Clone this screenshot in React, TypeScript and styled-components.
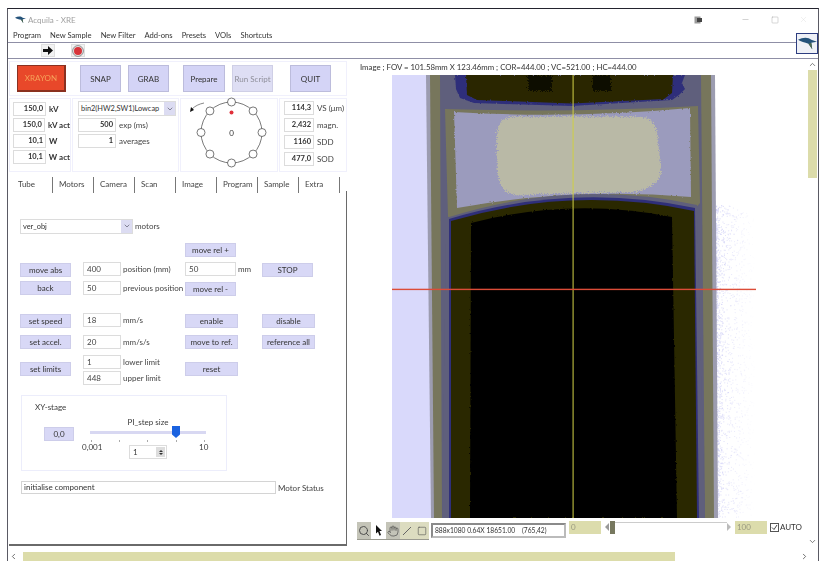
import React from "react";
import styled, { createGlobalStyle } from "styled-components";
import { ChevronDown, ChevronUp, ChevronLeft, ChevronRight, Search, Hand, Square, Minus, X } from "lucide-react";

const Global = createGlobalStyle`
  html, body { margin: 0; padding: 0; background: #fff; }
  body { font-family: "Lato", "Open Sans", sans-serif; font-size: 8px; color: #3a3a3a; width: 830px; height: 569px; overflow: hidden; }
  * { box-sizing: border-box; }
`;

const Page = styled.div`
  padding: 8px 11px 0 7px;
  filter: blur(0.3px);
`;
const Win = styled.div`
  position: relative;
  width: 812px;
  height: 553px;
  border-top: 1px solid #23232e;
  border-left: 1px solid #5a5a64;
  border-right: 1px solid #5a5a64;
  display: flex;
  flex-direction: column;
`;
const TitleBar = styled.div`
  height: 19px;
  flex: none;
  display: flex;
  align-items: center;
  padding-left: 7px;
  padding-top: 2px;
  gap: 2px;
  color: #a0a0a0;
`;
const WinControls = styled.div`
  margin-left: auto;
  display: flex;
  align-items: center;
`;
const ControlSlot = styled.span<{ $w: number; $pale?: boolean }>`
  width: ${(p) => p.$w}px;
  display: flex;
  justify-content: center;
  color: ${(p) => (p.$pale ? "#d8d8d8" : "#888")};
`;
const MenuBar = styled.div`
  height: 14px;
  flex: none;
  display: flex;
  align-items: center;
  padding-left: 5px;
  gap: 9px;
  font-size: 7.6px;
  color: #333;
`;
const ToolStrip = styled.div`
  height: 17px;
  flex: none;
  border-top: 1px solid #8f8fa6;
  border-bottom: 1px solid #8f8fa6;
  display: flex;
  align-items: center;
  padding-left: 33px;
  gap: 16px;
`;
const ToolBtn = styled.div`
  width: 14px;
  height: 13px;
  background: #f2f2f2;
  border: 1px solid #e0e0e0;
  display: flex;
  align-items: center;
  justify-content: center;
`;
const LogoBox = styled.div`
  position: absolute;
  top: 24px;
  right: 0;
  width: 22px;
  height: 21px;
  border: 1px solid #2d3d80;
  background: #eef0f6;
  display: flex;
  align-items: center;
  justify-content: center;
`;
const Main = styled.div`
  flex: none;
  height: 487px;
  display: flex;
`;
const Left = styled.div`
  width: 339px;
  flex: none;
  display: flex;
  flex-direction: column;
  padding: 2px 0 0 1px;
`;
const ButtonRow = styled.div`
  height: 35px;
  flex: none;
  border: 1px solid #f0f0fc;
  display: flex;
  align-items: center;
  padding-left: 6px;
`;
const BigBtn = styled.div<{ $w: number; $ml: number; $dim?: boolean }>`
  width: ${(p) => p.$w}px;
  height: 27px;
  margin-left: ${(p) => p.$ml}px;
  background: ${(p) => (p.$dim ? "#dedef4" : "#d4d4f6")};
  border: 1px solid ${(p) => (p.$dim ? "#cfcfe6" : "#bcbcdc")};
  color: ${(p) => (p.$dim ? "#8f8f9a" : "#333")};
  display: flex;
  align-items: center;
  justify-content: center;
  white-space: nowrap;
`;
const XrayBtn = styled(BigBtn)`
  background: #e8482a;
  border: 1px solid #8a3020;
  border-bottom-width: 2px;
  border-right-width: 2px;
  color: #f6a25a;
`;
const InfoRow = styled.div`
  height: 74px;
  margin-top: 2px;
  flex: none;
  display: flex;
  gap: 1px;
`;
const InfoGroup = styled.div<{ $w: number }>`
  width: ${(p) => p.$w}px;
  flex: none;
  border: 1px solid #f0f0fc;
  position: relative;
  display: flex;
  flex-direction: column;
`;
const ReadoutCol = styled.div<{ $step: number; $pad: number; $top: number }>`
  display: flex;
  flex-direction: column;
  gap: ${(p) => p.$step}px;
  padding: ${(p) => p.$top}px 0 0 ${(p) => p.$pad}px;
`;
const Readout = styled.div`
  display: flex;
  align-items: center;
  gap: 3px;
`;
const NumBox = styled.div<{ $w: number }>`
  width: ${(p) => p.$w}px;
  height: 14px;
  border: 1px solid #dcdcdc;
  background: #fff;
  font-weight: 700;
  font-size: 7.5px;
  text-align: right;
  padding-right: 2px;
  line-height: 12px;
  color: #333;
`;
const BoldLabel = styled.span`
  font-weight: 700;
  color: #333;
  white-space: nowrap;
`;
const PlainLabel = styled.span`
  color: #444;
  white-space: nowrap;
`;
const SelectBox = styled.div<{ $w: number }>`
  width: ${(p) => p.$w}px;
  height: 15px;
  border: 1px solid #dcdcdc;
  display: flex;
  align-items: center;
  justify-content: space-between;
  padding-left: 2px;
  background: #fff;
  font-size: 7.4px;
  color: #333;
  white-space: nowrap;
`;
const SelectArrow = styled.span`
  width: 11px;
  height: 100%;
  background: #dcdcf2;
  display: flex;
  align-items: center;
  justify-content: center;
  color: #556;
`;
const MidCol = styled.div`
  padding: 2px 0 0 5px;
  display: flex;
  flex-direction: column;
  gap: 2px;
`;
const RotarySvg = styled.svg`
  overflow: visible;
`;
const Tabs = styled.div`
  height: 16px;
  margin-top: 5px;
  flex: none;
  display: flex;
  padding-left: 3px;
`;
const Tab = styled.div`
  width: 41px;
  border-right: 1px solid #777;
  padding-left: 6px;
  line-height: 15px;
  color: #444;
  white-space: nowrap;
`;
const Panel = styled.div`
  flex: 1;
  margin-top: -2px;
  border-right: 1px solid #6a6a6a;
  border-bottom: 2px solid #6a6a6a;
  padding: 28px 0 0 11px;
  display: flex;
  flex-direction: column;
`;
const MotorRow = styled.div`
  display: flex;
  align-items: center;
  gap: 2px;
  height: 14px;
`;
const ControlGrid = styled.div`
  margin-top: 10px;
  display: grid;
  grid-template-columns: 63px 102px 77px 60px;
  grid-template-rows: 19px 19px 32px 22px 20px 31px;
  align-items: start;
`;
const Cell = styled.div<{ $col: number; $row: number; $top?: number }>`
  grid-column: ${(p) => p.$col};
  grid-row: ${(p) => p.$row};
  margin-top: ${(p) => p.$top ?? 0}px;
  display: flex;
  align-items: center;
  gap: 2px;
`;
const SmallBtn = styled.div<{ $w?: number }>`
  width: ${(p) => p.$w ?? 51}px;
  height: 14px;
  background: #d8d8f6;
  border: 1px solid #cdcdea;
  display: flex;
  align-items: center;
  justify-content: center;
  color: #333;
  white-space: nowrap;
`;
const Field = styled.div<{ $w: number }>`
  width: ${(p) => p.$w}px;
  height: 14px;
  border: 1px solid #dcdcdc;
  background: #fff;
  padding-left: 3px;
  line-height: 12px;
  color: #444;
`;
const StackCell = styled(Cell)`
  flex-direction: column;
  align-items: flex-start;
  gap: 2px;
`;
const LimitRow = styled.div`
  display: flex;
  align-items: center;
  gap: 2px;
`;
const XYBox = styled.div`
  margin: 9px 0 0 1px;
  width: 206px;
  height: 76px;
  border: 1px solid #ecedfb;
  position: relative;
  display: grid;
  grid-template-columns: 68px 116px;
  grid-template-rows: 14px 12px 20px 15px;
  padding: 6px 0 0 0;
`;
const XYTitle = styled.div`
  grid-column: 1;
  padding-left: 13px;
`;
const StepTitle = styled.div`
  grid-column: 2;
  grid-row: 2;
  text-align: center;
  line-height: 12px;
`;
const XYLeft = styled.div`
  grid-column: 1;
  grid-row: 3;
  padding-left: 22px;
  margin-top: -1px;
`;
const Slider = styled.div`
  grid-column: 2;
  grid-row: 3;
  position: relative;
`;
const SliderTrack = styled.div`
  position: absolute;
  left: 0;
  right: 0;
  top: 3px;
  height: 3px;
  background: #d8d8f2;
`;
const Thumb = styled.div`
  position: absolute;
  left: 82px;
  top: -2px;
  width: 8px;
  height: 12px;
  background: #1a62e0;
  clip-path: polygon(0 0, 100% 0, 100% 70%, 50% 100%, 0 70%);
`;
const Tick = styled.span<{ $x: number }>`
  position: absolute;
  top: 12px;
  left: ${(p) => p.$x}px;
  width: 1px;
  height: 2px;
  background: #aaa;
`;
const ScaleLabel = styled.span<{ $x: number }>`
  position: absolute;
  left: ${(p) => p.$x}px;
  top: 45px;
  line-height: 12px;
`;
const Spin = styled.div`
  position: absolute;
  left: 107px;
  top: 49px;
  width: 38px;
  height: 14px;
  border: 1px solid #dcdcdc;
  padding-left: 3px;
  line-height: 12px;
  background: #fff;
`;
const SpinBtns = styled.span`
  position: absolute;
  right: 1px;
  top: 1px;
  width: 9px;
  height: 10px;
  background: #ddd;
  display: flex;
  flex-direction: column;
  align-items: center;
  justify-content: center;
  gap: 1px;
`;
const Tri = styled.i<{ $down?: boolean }>`
  display: block;
  width: 0;
  height: 0;
  border-left: 2px solid transparent;
  border-right: 2px solid transparent;
  ${(p) => (p.$down ? "border-top: 2px solid #333;" : "border-bottom: 2px solid #333;")}
`;
const StatusRow = styled.div`
  margin: 10px 0 0 1px;
  display: flex;
  align-items: center;
  gap: 2px;
`;
const StatusField = styled.div`
  width: 255px;
  height: 13px;
  border: 1px solid #d4d4d4;
  padding-left: 2px;
  line-height: 11px;
  color: #333;
`;
const Right = styled.div`
  flex: 1;
  display: flex;
  position: relative;
`;
const Viewer = styled.div`
  flex: 1;
  display: flex;
  flex-direction: column;
`;
const Caption = styled.div`
  height: 16px;
  padding: 2px 0 0 13px;
  line-height: 12px;
  font-size: 7.8px;
  color: #333;
  white-space: nowrap;
`;
const ImageWrap = styled.div`
  padding-left: 45px;
  height: 443px;
  flex: none;
`;
const ScanSvg = styled.svg`
  display: block;
`;
const Bottom = styled.div`
  margin-top: 3px;
  display: flex;
  padding-left: 10px;
  align-items: flex-start;
`;
const Tools = styled.div`
  display: flex;
  margin-top: 1px;
  height: 18px;
  background: #c8c8b4;
  border-bottom: 1px solid #9a9a90;
`;
const ToolCell = styled.div<{ $on?: boolean; $alt?: boolean }>`
  width: 14.4px;
  display: flex;
  align-items: center;
  justify-content: center;
  background: ${(p) => (p.$on ? "#fff" : p.$alt ? "#dcdcc0" : "#c4c4b8")};
  color: #444;
`;
const CoordBox = styled.div`
  margin-left: 2px;
  margin-top: 2px;
  width: 135px;
  height: 15px;
  border: 2px solid #8a8a8a;
  border-right-color: #bbb;
  border-bottom-color: #bbb;
  background: #fff;
  font-size: 6.7px;
  line-height: 11px;
  padding-left: 2px;
  color: #333;
  white-space: pre;
`;
const RangeBox = styled.div<{ $ml: number }>`
  margin-left: ${(p) => p.$ml}px;
  width: 32px;
  height: 13px;
  background: #dcdcac;
  color: #9a9a80;
  line-height: 12px;
  padding-left: 2px;
`;
const RangeSlider = styled.div`
  margin-left: 4px;
  width: 124px;
  height: 15px;
  position: relative;
`;
const RangeLine = styled.div`
  position: absolute;
  left: 8px;
  right: 2px;
  top: 1px;
  height: 1px;
  background: #ccc;
`;
const RangeThumb = styled.div`
  position: absolute;
  left: 5px;
  top: 0;
  width: 5px;
  height: 13px;
  background: #77785f;
`;
const RangeArrow = styled.i<{ $right?: boolean }>`
  position: absolute;
  ${(p) => (p.$right ? "right: -2px; border-left: 4px solid #bbb;" : "left: 0; border-right: 4px solid #999;")}
  top: 2px;
  width: 0;
  height: 0;
  border-top: 4px solid transparent;
  border-bottom: 4px solid transparent;
`;
const AutoWrap = styled.div`
  display: flex;
  margin: 1px 0 0 3px;
  align-items: center;
  gap: 1px;
  color: #333;
  line-height: 10px;
`;
const Check = styled.span`
  width: 9px;
  height: 9px;
  border: 1px solid #555;
  display: flex;
  align-items: center;
  justify-content: center;
`;
const VScroll = styled.div`
  width: 11px;
  flex: none;
  display: flex;
  flex-direction: column;
  align-items: center;
  color: #555;
  padding-top: 1px;
`;
const VThumb = styled.div`
  margin-top: 1px;
  width: 9px;
  height: 108px;
  background: #dcdcaa;
`;
const VSpace = styled.div`
  flex: 1;
`;
const HScroll = styled.div`
  height: 15px;
  padding: 5px 0 0 1px;
  flex: none;
  display: flex;
  align-items: center;
  color: #444;
`;
const HThumb = styled.div`
  margin-left: 5px;
  width: 652px;
  height: 9px;
  background: #dcdcaa;
`;
const HEnd = styled.div`
  margin-left: auto;
  margin-right: 9px;
  display: flex;
`;

const Bird = ({ w = 11 }: { w?: number }) => (
  <svg width={w} height={w * 0.7} viewBox="0 0 20 14">
    <path d="M0 3 C5 0 11 0 14 3 L20 5 L14 6 L15 13 L11 7 C7 6 3 5 0 3Z" fill="#24527a" />
    <path d="M11 7 L15 13 L14 6Z" fill="#4e6a50" />
  </svg>
);

const Rotary = () => {
  const cx = 50.5, cy = 33.5, r = 30.5;
  const pts = Array.from({ length: 8 }, (_, i) => {
    const a = (i * Math.PI) / 4;
    return [cx + r * Math.sin(a), cy - r * Math.cos(a)];
  });
  return (
    <RotarySvg width="97" height="72" viewBox="0 0 97 72">
      <circle cx={cx} cy={cy} r={r} fill="none" stroke="#555" strokeWidth="0.8" />
      {pts.map(([x, y], i) => (
        <circle key={i} cx={x} cy={y} r="4" fill="#fff" stroke="#555" strokeWidth="0.8" />
      ))}
      <circle cx={cx} cy={13.5} r="2" fill="#e0303a" />
      <text x={cx} y={36.5} textAnchor="middle" fontSize="8" fill="#333" fontFamily="Lato, sans-serif">0</text>
      <path d="M23 4 C18 5 14 7 11 10" fill="none" stroke="#555" strokeWidth="0.7" />
      <path d="M9 13 L10 8 L13 11Z" fill="#111" />
    </RotarySvg>
  );
};

function dots() {
  const out: React.ReactElement[] = [];
  let s = 12345;
  const rnd = () => {
    s = (s * 1103515245 + 12345) & 0x7fffffff;
    return s / 0x7fffffff;
  };
  for (let i = 0; i < 1700; i++) {
    const y = 130 + rnd() * 313;
    const d = Math.pow(rnd(), 2.6) * 38;
    out.push(<rect key={i} x={324 + d} y={y} width="1" height="1" fill="#cfcff6" opacity={0.8 - d / 50} />);
  }
  return out;
}

const Scan = () => (
  <ScanSvg width="364" height="443" viewBox="0 0 364 443">
    <defs>
      <filter id="rough" x="-5%" y="-5%" width="110%" height="110%">
        <feTurbulence type="fractalNoise" baseFrequency="0.7" numOctaves="2" seed="4" result="n" />
        <feDisplacementMap in="SourceGraphic" in2="n" scale="8" />
      </filter>
      <filter id="rough2" x="-5%" y="-5%" width="110%" height="110%">
        <feTurbulence type="fractalNoise" baseFrequency="0.5" numOctaves="2" seed="8" result="n" />
        <feDisplacementMap in="SourceGraphic" in2="n" scale="2.5" />
      </filter>
      <filter id="speck" x="-10%" y="-15%" width="120%" height="130%" colorInterpolationFilters="sRGB">
        <feGaussianBlur in="SourceAlpha" stdDeviation="5" result="b" />
        <feTurbulence type="fractalNoise" baseFrequency="0.85" numOctaves="1" seed="3" result="n" />
        <feColorMatrix in="n" type="matrix" values="0 0 0 0 0  0 0 0 0 0  0 0 0 0 0  1 0 0 0 0" result="na" />
        <feComposite in="b" in2="na" operator="arithmetic" k1="0" k2="1.6" k3="1" k4="-1" result="c" />
        <feComponentTransfer in="c" result="t"><feFuncA type="linear" slope="10" intercept="-4.5" /></feComponentTransfer>
        <feFlood floodColor="#b9b9a6" />
        <feComposite in2="t" operator="in" />
      </filter>
    </defs>
    <rect width="364" height="443" fill="#fff" />
    <rect width="44" height="443" fill="#d9d9fb" />
    {dots()}
    <path d="M34 0 H323 L326 443 H39Z" fill="#9c9cb0" />
    <path d="M38 0 H319 L322 443 H42Z" fill="#77765c" />
    <path d="M48 0 H309 L313 443 H50Z" fill="#5f5f7c" />
    {/* top cavity */}
    <path d="M63 0 H293 L290 8 L293 14 L287 20 L280 25 L180 31 L82 28 L68 23 L64 14Z" fill="#2f2f7a" filter="url(#rough2)" />
    <path d="M74 0 H281 L280 18 L272 24 L180 28.5 L85 25 L75 20Z" fill="#2a2800" filter="url(#rough2)" />
    <rect x="136" y="0" width="24" height="16" fill="#0c0c06" filter="url(#rough)" />
    <rect x="200" y="0" width="19" height="16" fill="#0c0c06" filter="url(#rough)" />
    {/* olive frame and lavender window */}
    <path d="M53 34 Q180 38 306 31 L308 128 L302 135 L56 142Z" fill="#77765c" />
    <path d="M62 37 Q180 44 298 33 L299 122 Q180 112 65 133Z" fill="#9b9bbd" filter="url(#rough2)" />
    <path d="M116 40 H252 Q265 42 267 60 L271 100 Q264 116 240 119 Q180 119 122 122 Q106 118 104 100 L103 58 Q106 42 116 40Z" fill="#b9b9a6" filter="url(#speck)" />
    {/* lower cavity */}
    <path d="M54 143 Q180 103 305 130 L313 443 H50Z" fill="#5f5f7c" />
    <path d="M57 144 Q180 107 303 133 L307 443 H57Z" fill="#2f2f7a" />
    <path d="M59 146 Q180 110 302 136 L305 443 H59Z" fill="#2a2800" />
    <path d="M79 148 Q180 122 280 142 L285 443 H78Z" fill="#000" filter="url(#rough2)" />
    <rect x="180.5" y="0" width="1.2" height="443" fill="#cfcf45" opacity="0.85" />
    <rect x="0" y="213.7" width="364" height="1.4" fill="#dc4c38" />
  </ScanSvg>
);

export default function App() {
  return (
    <>
      <Global />
      <Page>
        <Win>
          <TitleBar>
            <Bird />
            <span>Acquila - XRE</span>
            <WinControls>
              <ControlSlot $w={20}>
                <svg width="8" height="8" viewBox="0 0 8 8"><rect x="0.5" y="0.5" width="6" height="7" fill="#999" /><rect x="3" y="2" width="5" height="4" fill="#444" /></svg>
              </ControlSlot>
              <ControlSlot $w={23} />
              <ControlSlot $w={29}><Minus size={9} strokeWidth={1} /></ControlSlot>
              <ControlSlot $w={29}><Square size={8} strokeWidth={1} /></ControlSlot>
              <ControlSlot $w={29} $pale><X size={9} strokeWidth={1} /></ControlSlot>
            </WinControls>
          </TitleBar>
          <MenuBar>
            {["Program", "New Sample", "New Filter", "Add-ons", "Presets", "VOIs", "Shortcuts"].map((m) => (
              <span key={m}>{m}</span>
            ))}
          </MenuBar>
          <ToolStrip>
            <ToolBtn>
              <svg width="10" height="9" viewBox="0 0 10 9"><path d="M0 3 H5 V0 L10 4.5 L5 9 V6 H0Z" fill="#111" /></svg>
            </ToolBtn>
            <ToolBtn>
              <svg width="12" height="12" viewBox="0 0 12 12"><circle cx="6" cy="6" r="5.4" fill="#e8e8e8" stroke="#777" strokeWidth="0.8" /><circle cx="6" cy="6" r="4" fill="#d8343a" /></svg>
            </ToolBtn>
          </ToolStrip>
          <LogoBox><Bird w={19} /></LogoBox>
          <Main>
            <Left>
              <ButtonRow>
                <XrayBtn $w={49} $ml={1}>XRAYON</XrayBtn>
                <BigBtn $w={41} $ml={14}>SNAP</BigBtn>
                <BigBtn $w={41} $ml={7}>GRAB</BigBtn>
                <BigBtn $w={42} $ml={14}>Prepare</BigBtn>
                <BigBtn $w={41} $ml={7} $dim>Run Script</BigBtn>
                <BigBtn $w={41} $ml={17}>QUIT</BigBtn>
              </ButtonRow>
              <InfoRow>
                <InfoGroup $w={62}>
                  <ReadoutCol $step={2} $pad={3} $top={3}>
                    <Readout><NumBox $w={33}>150,0</NumBox><BoldLabel>kV</BoldLabel></Readout>
                    <Readout><NumBox $w={33}>150,0</NumBox><BoldLabel>kV act</BoldLabel></Readout>
                    <Readout><NumBox $w={33}>10,1</NumBox><BoldLabel>W</BoldLabel></Readout>
                    <Readout><NumBox $w={33}>10,1</NumBox><BoldLabel>W act</BoldLabel></Readout>
                  </ReadoutCol>
                </InfoGroup>
                <InfoGroup $w={107}>
                  <MidCol>
                    <SelectBox $w={98}>bin2(HW2,SW1)Lowcap<SelectArrow><ChevronDown size={8} /></SelectArrow></SelectBox>
                    <Readout><NumBox $w={38}>500</NumBox><PlainLabel>exp (ms)</PlainLabel></Readout>
                    <Readout><NumBox $w={38}>1</NumBox><PlainLabel>averages</PlainLabel></Readout>
                  </MidCol>
                </InfoGroup>
                <InfoGroup $w={98}><Rotary /></InfoGroup>
                <InfoGroup $w={68}>
                  <ReadoutCol $step={3} $pad={4} $top={2}>
                    <Readout><NumBox $w={30}>114,3</NumBox><PlainLabel>VS (μm)</PlainLabel></Readout>
                    <Readout><NumBox $w={30}>2,432</NumBox><PlainLabel>magn.</PlainLabel></Readout>
                    <Readout><NumBox $w={30}>1160</NumBox><PlainLabel>SDD</PlainLabel></Readout>
                    <Readout><NumBox $w={30}>477,0</NumBox><PlainLabel>SOD</PlainLabel></Readout>
                  </ReadoutCol>
                </InfoGroup>
              </InfoRow>
              <Tabs>
                {["Tube", "Motors", "Camera", "Scan", "Image", "Program", "Sample", "Extra"].map((t) => (
                  <Tab key={t}>{t}</Tab>
                ))}
              </Tabs>
              <Panel>
                <MotorRow>
                  <SelectBox $w={113}>ver_obj<SelectArrow><ChevronDown size={8} /></SelectArrow></SelectBox>
                  <PlainLabel>motors</PlainLabel>
                </MotorRow>
                <ControlGrid>
                  <Cell $col={3} $row={1}><SmallBtn>move rel +</SmallBtn></Cell>
                  <Cell $col={1} $row={2} $top={1}><SmallBtn>move abs</SmallBtn></Cell>
                  <Cell $col={2} $row={2}><Field $w={38}>400</Field><PlainLabel>position (mm)</PlainLabel></Cell>
                  <Cell $col={3} $row={2}><Field $w={51}>50</Field><PlainLabel>mm</PlainLabel></Cell>
                  <Cell $col={4} $row={2} $top={1}><SmallBtn>STOP</SmallBtn></Cell>
                  <Cell $col={1} $row={3}><SmallBtn>back</SmallBtn></Cell>
                  <Cell $col={2} $row={3}><Field $w={38}>50</Field><PlainLabel>previous position</PlainLabel></Cell>
                  <Cell $col={3} $row={3} $top={1}><SmallBtn>move rel -</SmallBtn></Cell>
                  <Cell $col={1} $row={4} $top={1}><SmallBtn>set speed</SmallBtn></Cell>
                  <Cell $col={2} $row={4}><Field $w={38}>18</Field><PlainLabel>mm/s</PlainLabel></Cell>
                  <Cell $col={3} $row={4} $top={1}><SmallBtn $w={53}>enable</SmallBtn></Cell>
                  <Cell $col={4} $row={4} $top={1}><SmallBtn $w={53}>disable</SmallBtn></Cell>
                  <Cell $col={1} $row={5}><SmallBtn>set accel.</SmallBtn></Cell>
                  <Cell $col={2} $row={5}><Field $w={38}>20</Field><PlainLabel>mm/s/s</PlainLabel></Cell>
                  <Cell $col={3} $row={5}><SmallBtn $w={53}>move to ref.</SmallBtn></Cell>
                  <Cell $col={4} $row={5}><SmallBtn $w={53}>reference all</SmallBtn></Cell>
                  <Cell $col={1} $row={6} $top={7}><SmallBtn>set limits</SmallBtn></Cell>
                  <StackCell $col={2} $row={6}>
                    <LimitRow><Field $w={38}>1</Field><PlainLabel>lower limit</PlainLabel></LimitRow>
                    <LimitRow><Field $w={38}>448</Field><PlainLabel>upper limit</PlainLabel></LimitRow>
                  </StackCell>
                  <Cell $col={3} $row={6} $top={7}><SmallBtn $w={53}>reset</SmallBtn></Cell>
                </ControlGrid>
                <XYBox>
                  <XYTitle>XY-stage</XYTitle>
                  <StepTitle>PI_step size</StepTitle>
                  <XYLeft><SmallBtn $w={30}>0,0</SmallBtn></XYLeft>
                  <Slider>
                    <SliderTrack />
                    <Thumb />
                    <Tick $x={1} /><Tick $x={29} /><Tick $x={57} /><Tick $x={86} /><Tick $x={114} />
                  </Slider>
                  <ScaleLabel $x={60}>0,001</ScaleLabel>
                  <ScaleLabel $x={177}>10</ScaleLabel>
                  <Spin>1<SpinBtns><Tri /><Tri $down /></SpinBtns></Spin>
                </XYBox>
                <StatusRow>
                  <StatusField>initialise component</StatusField>
                  <PlainLabel>Motor Status</PlainLabel>
                </StatusRow>
              </Panel>
            </Left>
            <Right>
              <Viewer>
                <Caption>Image ; FOV = 101.58mm X 123.46mm ; COR=444.00 ; VC=521.00 ; HC=444.00</Caption>
                <ImageWrap><Scan /></ImageWrap>
                <Bottom>
                  <Tools>
                    <ToolCell><Search size={12} strokeWidth={1.8} /></ToolCell>
                    <ToolCell $on>
                      <svg width="8" height="11" viewBox="0 0 8 11"><path d="M1 0 L7 6 H4.5 L6 10 L4.5 10.7 L3 6.8 L1 8.5Z" fill="#111" /></svg>
                    </ToolCell>
                    <ToolCell><Hand size={12} strokeWidth={1.3} /></ToolCell>
                    <ToolCell $alt>
                      <svg width="10" height="10" viewBox="0 0 10 10"><path d="M1 9 L9 1" stroke="#666" strokeWidth="1" /></svg>
                    </ToolCell>
                    <ToolCell $alt><Square size={10} strokeWidth={1.3} /></ToolCell>
                  </Tools>
                  <CoordBox>{"888x1080 0.64X 18651.00    (765,42)"}</CoordBox>
                  <RangeBox $ml={3}>0</RangeBox>
                  <RangeSlider>
                    <RangeArrow />
                    <RangeLine />
                    <RangeThumb />
                    <RangeArrow $right />
                  </RangeSlider>
                  <RangeBox $ml={6}>100</RangeBox>
                  <AutoWrap>
                    <Check>
                      <svg width="7" height="7" viewBox="0 0 7 7"><path d="M1 3.5 L3 5.5 L6 1" fill="none" stroke="#333" strokeWidth="0.9" /></svg>
                    </Check>
                    AUTO
                  </AutoWrap>
                </Bottom>
              </Viewer>
              <VScroll>
                <ChevronUp size={9} strokeWidth={2} />
                <VThumb />
                <VSpace />
                <ChevronDown size={9} strokeWidth={2} />
              </VScroll>
            </Right>
          </Main>
          <HScroll>
            <ChevronLeft size={9} strokeWidth={2} />
            <HThumb />
            <HEnd><ChevronRight size={9} strokeWidth={2} /></HEnd>
          </HScroll>
        </Win>
      </Page>
    </>
  );
}
